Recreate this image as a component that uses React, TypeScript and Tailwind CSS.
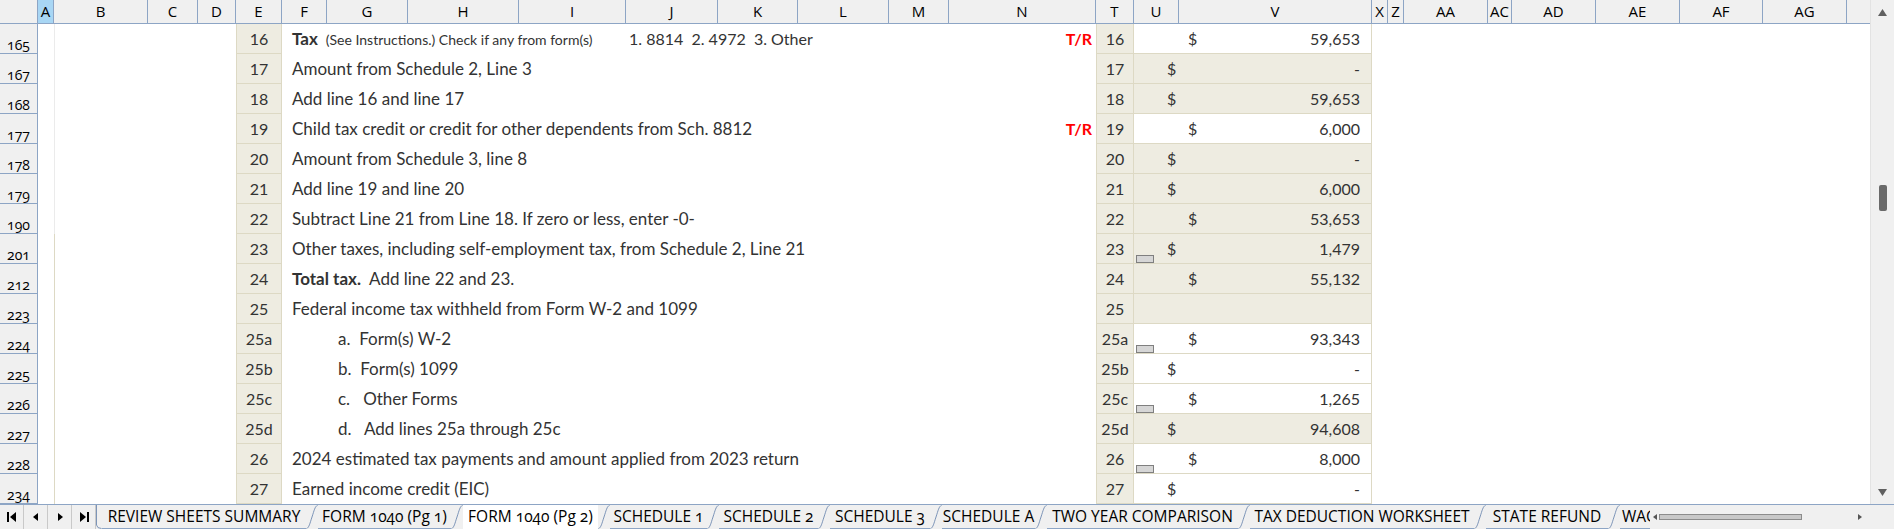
import React from "react";

const cols: { l: string; w: string; sel?: boolean }[] = [
  { l: "A", w: "w-[16px]", sel: true },
  { l: "B", w: "w-[94px]" },
  { l: "C", w: "w-[50px]" },
  { l: "D", w: "w-[38px]" },
  { l: "E", w: "w-[46px]" },
  { l: "F", w: "w-[45px]" },
  { l: "G", w: "w-[81px]" },
  { l: "H", w: "w-[111px]" },
  { l: "I", w: "w-[107px]" },
  { l: "J", w: "w-[92px]" },
  { l: "K", w: "w-[80px]" },
  { l: "L", w: "w-[91px]" },
  { l: "M", w: "w-[60px]" },
  { l: "N", w: "w-[147px]" },
  { l: "T", w: "w-[38px]" },
  { l: "U", w: "w-[45px]" },
  { l: "V", w: "w-[193px]" },
  { l: "X", w: "w-[16px]" },
  { l: "Z", w: "w-[16px]" },
  { l: "AA", w: "w-[84px]" },
  { l: "AC", w: "w-[24px]" },
  { l: "AD", w: "w-[84px]" },
  { l: "AE", w: "w-[84px]" },
  { l: "AF", w: "w-[83px]" },
  { l: "AG", w: "w-[84px]" },
];

type Row = {
  r: string;
  n: string;
  text?: React.ReactNode;
  tr?: boolean;
  white: boolean;
  d?: "i" | "l";
  v?: string;
  box?: boolean;
};

const ind = (s: string) => <span className="pl-[46px] whitespace-pre">{s}</span>;

const rows: Row[] = [
  {
    r: "165",
    n: "16",
    text: (
      <>
        <div className="w-[334px] shrink-0 flex items-center">
          <span className="font-bold">Tax</span>
          <span className="text-[14px] ml-[8px]">(See Instructions.) Check if any from form(s)</span>
        </div>
        <span className="whitespace-pre pl-[3px] text-[16px]">1. 8814  2. 4972  3. Other</span>
      </>
    ),
    tr: true,
    white: true,
    d: "i",
    v: "59,653",
  },
  { r: "167", n: "17", text: "Amount from Schedule 2, Line 3", white: false, d: "l", v: "-" },
  { r: "168", n: "18", text: "Add line 16 and line 17", white: false, d: "l", v: "59,653" },
  {
    r: "177",
    n: "19",
    text: "Child tax credit or credit for other dependents from Sch. 8812",
    tr: true,
    white: true,
    d: "i",
    v: "6,000",
  },
  { r: "178", n: "20", text: "Amount from Schedule 3, line 8", white: false, d: "l", v: "-" },
  { r: "179", n: "21", text: "Add line 19 and line 20", white: false, d: "l", v: "6,000" },
  {
    r: "190",
    n: "22",
    text: "Subtract Line 21 from Line 18. If zero or less, enter -0-",
    white: false,
    d: "i",
    v: "53,653",
  },
  {
    r: "201",
    n: "23",
    text: "Other taxes, including self-employment tax, from Schedule 2, Line 21",
    white: false,
    d: "l",
    v: "1,479",
    box: true,
  },
  {
    r: "212",
    n: "24",
    text: (
      <span className="whitespace-pre">
        <span className="font-bold">Total tax.</span>
        {"  Add line 22 and 23."}
      </span>
    ),
    white: false,
    d: "i",
    v: "55,132",
  },
  { r: "223", n: "25", text: "Federal income tax withheld from Form W-2 and 1099", white: false },
  { r: "224", n: "25a", text: ind("a.  Form(s) W-2"), white: true, d: "i", v: "93,343", box: true },
  { r: "225", n: "25b", text: ind("b.  Form(s) 1099"), white: true, d: "l", v: "-" },
  { r: "226", n: "25c", text: ind("c.   Other Forms"), white: true, d: "i", v: "1,265", box: true },
  { r: "227", n: "25d", text: ind("d.   Add lines 25a through 25c"), white: false, d: "l", v: "94,608" },
  {
    r: "228",
    n: "26",
    text: "2024 estimated tax payments and amount applied from 2023 return",
    white: true,
    d: "i",
    v: "8,000",
    box: true,
  },
  { r: "234", n: "27", text: "Earned income credit (EIC)", white: true, d: "l", v: "-" },
];

const tabs: { t: string; w: string; active?: boolean }[] = [
  { t: "REVIEW SHEETS SUMMARY", w: "w-[204px]" },
  { t: "FORM 1040 (Pg 1)", w: "w-[133px]" },
  { t: "FORM 1040 (Pg 2)", w: "w-[135px]", active: true },
  { t: "SCHEDULE 1", w: "w-[97px]" },
  { t: "SCHEDULE 2", w: "w-[99px]" },
  { t: "SCHEDULE 3", w: "w-[100px]" },
  { t: "SCHEDULE A", w: "w-[93px]" },
  { t: "TWO YEAR COMPARISON", w: "w-[191px]" },
  { t: "TAX DEDUCTION WORKSHEET", w: "w-[224px]" },
  { t: "STATE REFUND", w: "w-[122px]" },
  { t: "WAGES", w: "w-[120px]" },
];

const Sep = () => (
  <svg width="12" height="24" viewBox="0 0 12 24" className="shrink-0">
    <path d="M0.5 23.5 C 3 23, 4 18, 6 12 S 9 1, 11.5 0.5" fill="none" stroke="#7D95B8" strokeWidth="1" />
  </svg>
);

const ui = "font-['Open_Sans','Noto_Sans',sans-serif]";

export default function App() {
  return (
    <div className="w-[1894px] h-[529px] overflow-hidden bg-white flex flex-col">
      <div className="flex h-[504px]">
        <div className="w-[1870px] flex flex-col">
          {/* column header */}
          <div className={`flex h-[24px] shrink-0 bg-[#F0F0F0] border-b border-[#8DA5C5] text-[15px] text-black ${ui}`}>
            <div className="w-[38px] shrink-0 border-r border-[#8DA5C5]" />
            {cols.map((c) => (
              <div
                key={c.l}
                className={`${c.w} shrink-0 flex items-center justify-center border-r border-[#8DA5C5] ${
                  c.sel ? "bg-[#A8D6F4]" : ""
                }`}
              >
                {c.l}
              </div>
            ))}
            <div className="flex-1" />
          </div>
          {/* rows */}
          {rows.map((row, i) => (
            <div key={row.r} className="flex h-[30px] shrink-0 font-['Lato',sans-serif] text-[16px] text-[#333]">
              <div
                className={`w-[38px] shrink-0 bg-[#F0F0F0] border-r border-b border-[#8DA5C5] flex items-end justify-center pb-[1px] text-[14px] text-black leading-none oldstyle-nums ${ui}`}
              >
                {row.r}
              </div>
              <div className="w-[16px] shrink-0" />
              <div
                className={`w-[182px] shrink-0 border-l ${i < 7 ? "border-[#EBEBEB]" : "border-[#DDD9C4]"}`}
              />
              <div className="w-[46px] shrink-0 bg-[#EEECE1] border-x border-b border-[#DDD9C4] flex items-center justify-center">
                {row.n}
              </div>
              <div className="w-[814px] shrink-0 flex items-center pl-[10px] text-[17px]">
                {row.text}
                {row.tr && (
                  <span className="ml-auto pr-[4px] font-bold text-[16px] text-[#FF0000]">T/R</span>
                )}
              </div>
              <div className="w-[38px] shrink-0 bg-[#EEECE1] border-x border-b border-[#DDD9C4] flex items-center justify-center">
                {row.n}
              </div>
              <div
                className={`w-[238px] shrink-0 relative flex items-center border-r border-b border-[#DDD9C4] ${
                  row.white ? "bg-white" : "bg-[#EEECE1]"
                }`}
              >
                {row.d && <span className={row.d === "i" ? "pl-[54px]" : "pl-[33px]"}>$</span>}
                {row.v && <span className="ml-auto pr-[11px]">{row.v}</span>}
                {row.box && (
                  <div className="absolute left-[2px] bottom-0 w-[18px] h-[8px] bg-[#D6D6D6] border border-[#7F7F7F]" />
                )}
              </div>
              <div className="flex-1" />
            </div>
          ))}
        </div>
        {/* vertical scrollbar */}
        <div className="w-[24px] shrink-0 bg-[#F0F0F0] border-l border-[#E3E3E3] flex flex-col items-center">
          <div className="h-[24px] flex items-center justify-center">
            <svg width="9" height="7" viewBox="0 0 9 7">
              <path d="M4.5 0 L9 7 L0 7 Z" fill="#606060" />
            </svg>
          </div>
          <div className="mt-[161px] w-[8px] h-[26px] rounded-[2px] bg-[#6A6A6A]" />
          <div className="flex-1" />
          <div className="h-[24px] flex items-center justify-center">
            <svg width="9" height="7" viewBox="0 0 9 7">
              <path d="M0 0 L9 0 L4.5 7 Z" fill="#606060" />
            </svg>
          </div>
        </div>
      </div>
      {/* tab bar */}
      <div className={`flex h-[25px] shrink-0 bg-[#F0F0F0] border-t border-[#8DA5C5] text-[15.5px] text-black ${ui}`}>
        {[0, 1, 2, 3].map((k) => (
          <div key={k} className="w-[24px] shrink-0 flex items-center justify-center border-r border-[#C9C9C9]">
            <svg width="12" height="12" viewBox="0 0 12 12">
              {k === 0 && (
                <>
                  <rect x="1" y="1" width="2" height="10" fill="#000" />
                  <path d="M10 1 L4 6 L10 11 Z" fill="#000" />
                </>
              )}
              {k === 1 && <path d="M8 2 L3 6 L8 10 Z" fill="#000" />}
              {k === 2 && <path d="M4 2 L9 6 L4 10 Z" fill="#000" />}
              {k === 3 && (
                <>
                  <path d="M2 1 L8 6 L2 11 Z" fill="#000" />
                  <rect x="9" y="1" width="2" height="10" fill="#000" />
                </>
              )}
            </svg>
          </div>
        ))}
        <div className="w-[1554px] shrink-0 flex overflow-hidden">
          <svg width="6" height="24" viewBox="0 0 6 24" className="shrink-0">
            <path d="M0.5 0 L0.5 20 Q 1 23.5 5.5 23.5" fill="none" stroke="#7D95B8" strokeWidth="1" />
          </svg>
          {tabs.map((t, i) => (
            <React.Fragment key={t.t}>
              {i > 0 && <Sep />}
              <div
                className={`${t.w} shrink-0 flex items-center whitespace-nowrap oldstyle-nums ${
                  t.active ? "bg-white" : "border-b border-[#8DA5C5]"
                } ${i === tabs.length - 1 ? "justify-start pl-[2px]" : "justify-center"}`}
              >
                {t.t}
              </div>
            </React.Fragment>
          ))}
        </div>
        <div className="w-[220px] shrink-0 flex items-center">
          <svg width="8" height="8" viewBox="0 0 8 8" className="ml-[1px]">
            <path d="M6 1 L2 4 L6 7 Z" fill="#555" />
          </svg>
          <div className="w-[143px] h-[6px] bg-[#C8C8C8] border border-[#8C8C8C]" />
          <div className="flex-1" />
          <svg width="8" height="8" viewBox="0 0 8 8" className="mr-[6px]">
            <path d="M2 1 L6 4 L2 7 Z" fill="#555" />
          </svg>
        </div>
        <div className="w-[24px] shrink-0" />
      </div>
    </div>
  );
}
